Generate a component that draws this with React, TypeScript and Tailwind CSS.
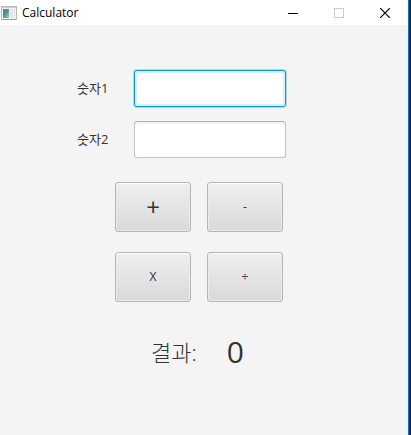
import { useState } from "react";

type Operator = "+" | "-" | "X" | "÷";

const OPERATORS: { symbol: Operator; label: string; size: string }[] = [
  { symbol: "+", label: "더하기", size: "text-2xl" },
  { symbol: "-", label: "빼기", size: "text-xs" },
  { symbol: "X", label: "곱하기", size: "text-xs" },
  { symbol: "÷", label: "나누기", size: "text-xs" },
];

function calculate(a: number, b: number, op: Operator) {
  if (op === "+") return a + b;
  if (op === "-") return a - b;
  if (op === "X") return a * b;
  return b === 0 ? 0 : a / b;
}

function AppIcon() {
  return (
    <svg viewBox="0 0 16 14" className="h-3.5 w-4 shrink-0" aria-hidden>
      <defs>
        <linearGradient id="pane" x1="0" y1="0" x2="1" y2="1">
          <stop offset="0" stopColor="#4f7cab" />
          <stop offset="0.5" stopColor="#4b9a95" />
          <stop offset="1" stopColor="#a5cfb4" />
        </linearGradient>
      </defs>
      <rect x="0.5" y="0.5" width="15" height="13" fill="#f4f5f6" stroke="#b3b8bd" />
      <path d="M1 1.5h14" stroke="#c9ced2" />
      <rect x="2" y="3" width="6" height="9" fill="url(#pane)" />
      <rect x="9" y="3" width="3" height="9" fill="#e3e5e7" />
      <rect x="13" y="3" width="1" height="9" fill="#dde1e3" />
      <path d="M1 13.5h14" stroke="#9aa1a6" />
    </svg>
  );
}

function TitleBar() {
  const button = "flex h-full w-[46px] items-center justify-center";
  return (
    <header className="flex h-[25px] items-center bg-white pl-px">
      <AppIcon />
      <h1 className="ml-[5px] flex-1 text-xs text-black">Calculator</h1>
      <div className="flex h-full">
        <button type="button" aria-label="Minimize" className={button}>
          <svg viewBox="0 0 10 10" className="h-2.5 w-2.5" shapeRendering="crispEdges">
            <path d="M0 5.5h10" stroke="#000" />
          </svg>
        </button>
        <button type="button" aria-label="Maximize" disabled className={button}>
          <svg viewBox="0 0 10 10" className="h-2.5 w-2.5" shapeRendering="crispEdges">
            <path d="M0.5 0.5h9v9h-9z" fill="none" stroke="#ccc" />
          </svg>
        </button>
        <button type="button" aria-label="Close" className={button}>
          <svg viewBox="0 0 10 10" className="h-2.5 w-2.5">
            <path d="M0 0l10 10M10 0L0 10" stroke="#000" strokeWidth="1.2" />
          </svg>
        </button>
      </div>
    </header>
  );
}

type FieldProps = {
  id: string;
  label: string;
  value: string;
  autoFocus?: boolean;
  onChange: (value: string) => void;
};

function NumberField({ id, label, value, autoFocus, onChange }: FieldProps) {
  return (
    <div className="flex items-center">
      <label htmlFor={id} className="w-[57px] text-[13px]">
        {label}
      </label>
      <input
        id={id}
        value={value}
        autoFocus={autoFocus}
        inputMode="decimal"
        onChange={(e) => onChange(e.target.value)}
        className="h-[37px] w-[152px] rounded-[3px] border border-[#c4c4c4] border-t-[#b5b5b5] bg-white px-2 text-xs caret-transparent shadow-[inset_0_2px_2px_#f1f1f1] outline-none focus:border-[#039ed3] focus:shadow-[0_0_0_1px_#a6dcf0,inset_0_0_0_2px_#dceff7]"
      />
    </div>
  );
}

export default function App() {
  const [first, setFirst] = useState("");
  const [second, setSecond] = useState("");
  const [result, setResult] = useState(0);

  const run = (op: Operator) => setResult(calculate(Number(first) || 0, Number(second) || 0, op));

  return (
    <div className="min-h-screen border-r-2 border-[#202020]">
      <div className="flex min-h-screen flex-col border-r border-[#0078d7] bg-[#f4f4f4] font-['Open_Sans','Noto_Sans_CJK_KR',sans-serif] text-[#333]">
        <TitleBar />
        <main className="flex-1 pt-[45px] pl-[77px]">
          <div className="flex flex-col gap-3.5">
            <NumberField id="first" label="숫자1" value={first} onChange={setFirst} autoFocus />
            <NumberField id="second" label="숫자2" value={second} onChange={setSecond} />
          </div>

          <div className="mt-6 ml-[38px] grid w-[168px] grid-cols-2 gap-x-4 gap-y-5">
            {OPERATORS.map(({ symbol, label, size }) => (
              <button
                key={symbol}
                type="button"
                aria-label={label}
                onClick={() => run(symbol)}
                className={`flex h-[50px] items-center justify-center rounded-[3px] border border-[#b5b5b5] bg-linear-to-b from-[#efefef] to-[#d9d9d9] shadow-[inset_0_1px_0_#fff,inset_0_0_0_1px_#ebebeb] ${size}`}
              >
                {symbol}
              </button>
            ))}
          </div>

          <div className="mt-8 ml-[74px] flex items-center gap-[30px]">
            <span className="text-[22px] font-light">결과:</span>
            <output className="text-[30px] leading-9">{result}</output>
          </div>
        </main>
      </div>
    </div>
  );
}
